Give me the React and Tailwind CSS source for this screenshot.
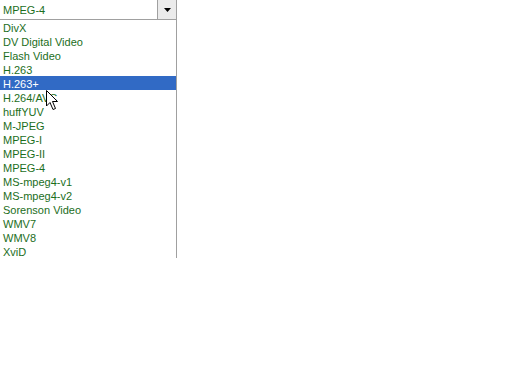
import React from 'react';

const codecs = [
  'DivX',
  'DV Digital Video',
  'Flash Video',
  'H.263',
  'H.263+',
  'H.264/AVC',
  'huffYUV',
  'M-JPEG',
  'MPEG-I',
  'MPEG-II',
  'MPEG-4',
  'MS-mpeg4-v1',
  'MS-mpeg4-v2',
  'Sorenson Video',
  'WMV7',
  'WMV8',
  'XviD',
];

const Cursor = () => (
  <svg width="13" height="21" viewBox="0 0 13 21" className="absolute left-[46px] top-[90px]">
    <path d="M0.5 0.5 L0.5 16 L4 12.5 L7 19.5 L9.5 18.5 L6.5 11.5 L11.5 11.5 Z" fill="#fff" stroke="#000" strokeWidth="1" />
  </svg>
);

export default function App() {
  const selected = 'H.263+';
  return (
    <div className="relative w-[512px] h-[384px] bg-white overflow-hidden font-['Liberation_Sans',Arial,sans-serif] text-[11px]">
      <div className="w-[177px]">
        <div className="flex h-[20px] border-b border-r border-[#a0a0a0]">
          <div className="flex-1 flex items-center pl-[3px] pt-[1px] text-[#1c6e1c]">MPEG-4</div>
          <div className="w-[19px] h-[19px] flex items-center justify-center bg-[#ebebeb] border-l border-[#a0a0a0]">
            <svg width="7" height="4" viewBox="0 0 7 4">
              <path d="M0 0 H7 L3.5 4 Z" fill="#000" />
            </svg>
          </div>
        </div>
        <ul className="border-r border-[#a0a0a0]">
          {codecs.map((c) => (
            <li
              key={c}
              className={
                'h-[14px] leading-[14px] pl-[3px] pt-[1px] overflow-hidden ' +
                (c === selected ? 'bg-[#316ac5] text-white' : 'text-[#1c6e1c]')
              }
            >
              {c}
            </li>
          ))}
        </ul>
      </div>
      <Cursor />
    </div>
  );
}
